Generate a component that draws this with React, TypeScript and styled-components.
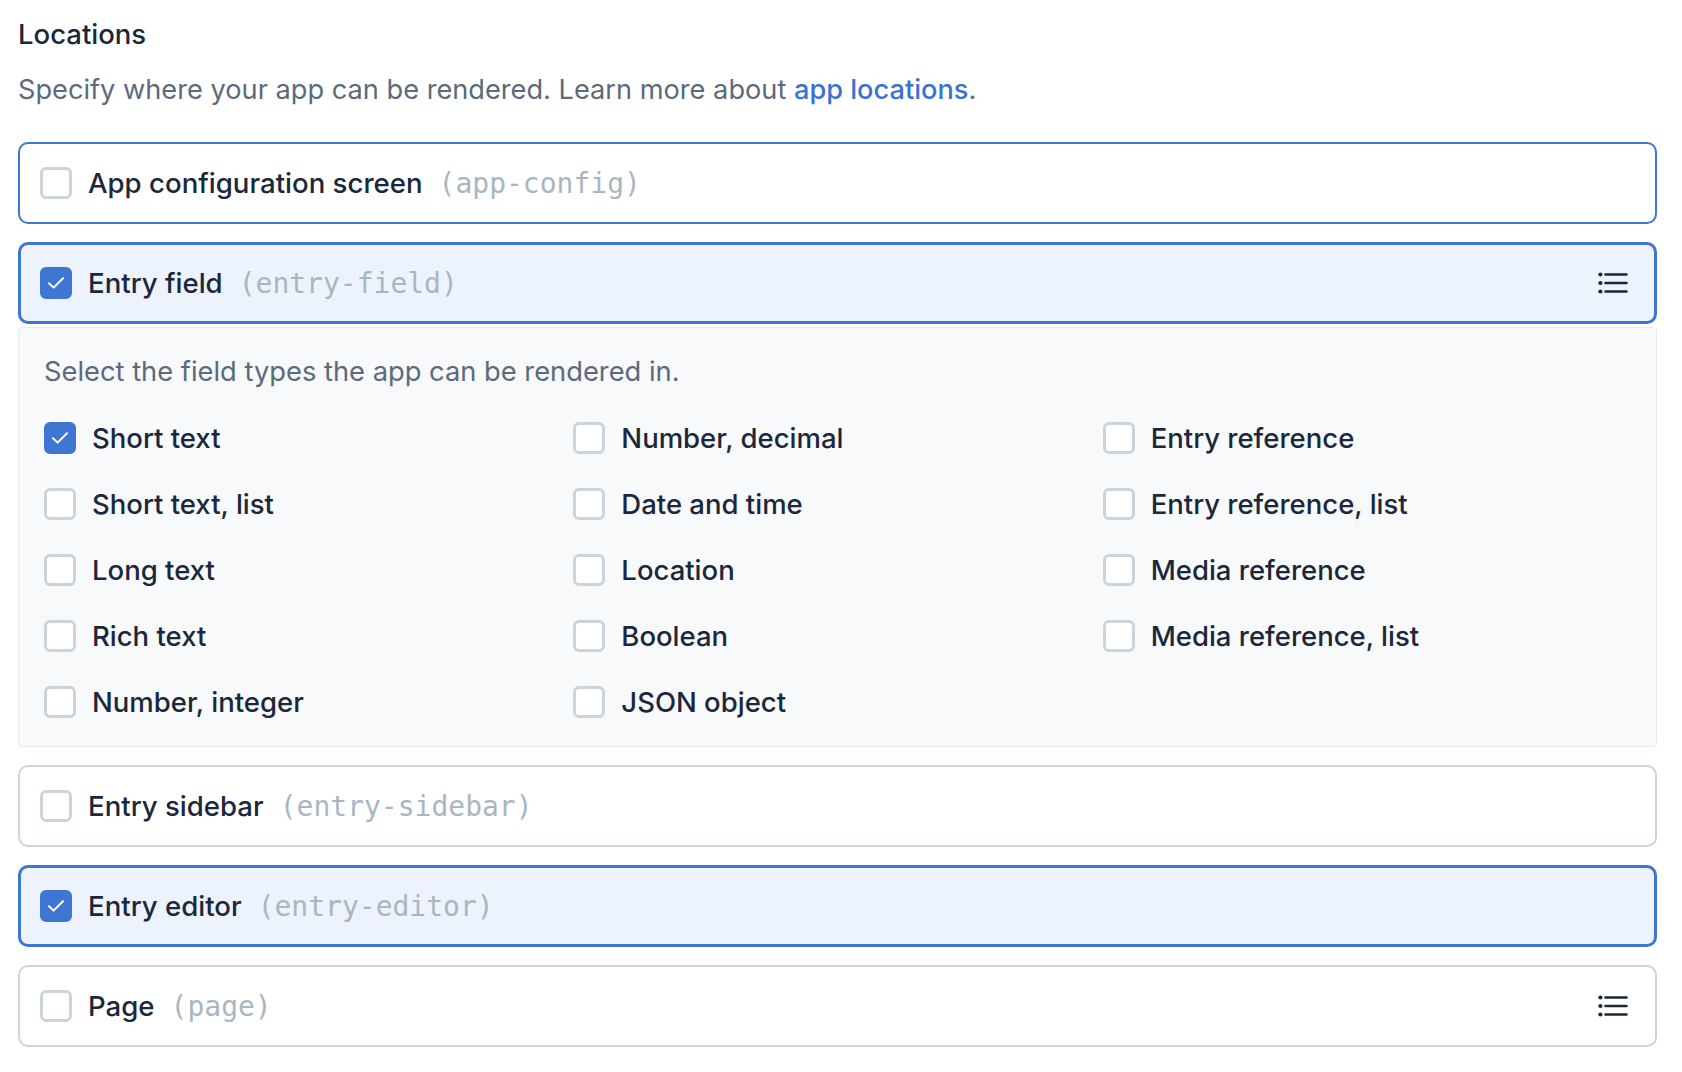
import React from 'react';
import styled, { createGlobalStyle, css } from 'styled-components';

const GlobalStyle = createGlobalStyle`
  * { box-sizing: border-box; }
  body {
    margin: 0;
    background: #ffffff;
    font-family: Inter, "Noto Sans", sans-serif;
    color: #1b273a;
  }
`;

type Location = {
  name: string;
  id: string;
  checked: boolean;
  focused?: boolean;
  listIcon?: boolean;
};

const locations: Location[] = [
  { name: 'App configuration screen', id: 'app-config', checked: false, focused: true },
  { name: 'Entry field', id: 'entry-field', checked: true, listIcon: true },
  { name: 'Entry sidebar', id: 'entry-sidebar', checked: false },
  { name: 'Entry editor', id: 'entry-editor', checked: true },
  { name: 'Page', id: 'page', checked: false, listIcon: true },
];

// row by row, three columns
const fieldTypes: { label: string; checked: boolean }[] = [
  { label: 'Short text', checked: true },
  { label: 'Number, decimal', checked: false },
  { label: 'Entry reference', checked: false },
  { label: 'Short text, list', checked: false },
  { label: 'Date and time', checked: false },
  { label: 'Entry reference, list', checked: false },
  { label: 'Long text', checked: false },
  { label: 'Location', checked: false },
  { label: 'Media reference', checked: false },
  { label: 'Rich text', checked: false },
  { label: 'Boolean', checked: false },
  { label: 'Media reference, list', checked: false },
  { label: 'Number, integer', checked: false },
  { label: 'JSON object', checked: false },
];

const Checkbox = ({ checked }: { checked: boolean }) => (
  <Box $checked={checked}>
    {checked && (
      <svg width="18" height="14" viewBox="0 0 18 14" fill="none">
        <path d="M2 7.2 L6.6 11.6 L16 2.2" stroke="#ffffff" strokeWidth="2" strokeLinecap="round" strokeLinejoin="round" />
      </svg>
    )}
  </Box>
);

const ListIcon = () => (
  <IconWrap>
    <svg width="30" height="22" viewBox="0 0 30 22" fill="none">
      <circle cx="2.4" cy="2.5" r="2.1" fill="#1b273a" />
      <circle cx="2.4" cy="11" r="2.1" fill="#1b273a" />
      <circle cx="2.4" cy="19.5" r="2.1" fill="#1b273a" />
      <path d="M7.5 2.5 H28.5 M7.5 11 H28.5 M7.5 19.5 H28.5" stroke="#1b273a" strokeWidth="2.6" strokeLinecap="round" />
    </svg>
  </IconWrap>
);

const LocationCard = ({ loc }: { loc: Location }) => (
  <Card $checked={loc.checked} $focused={!!loc.focused}>
    <Checkbox checked={loc.checked} />
    <CardLabel>{loc.name}</CardLabel>
    <Code>({loc.id})</Code>
    {loc.listIcon && <ListIcon />}
  </Card>
);

export default function App() {
  return (
    <Page>
      <GlobalStyle />
      <Heading>Locations</Heading>
      <Description>
        Specify where your app can be rendered. Learn more about <Link href="#">app locations</Link>.
      </Description>
      <List>
        {locations.map((loc) =>
          loc.id === 'entry-field' ? (
            <Group key={loc.id}>
              <LocationCard loc={loc} />
              <Panel>
                <Hint>Select the field types the app can be rendered in.</Hint>
                <FieldGrid>
                  {fieldTypes.map((f) => (
                    <FieldItem key={f.label}>
                      <Checkbox checked={f.checked} />
                      <FieldLabel>{f.label}</FieldLabel>
                    </FieldItem>
                  ))}
                </FieldGrid>
              </Panel>
            </Group>
          ) : (
            <LocationCard key={loc.id} loc={loc} />
          ),
        )}
      </List>
    </Page>
  );
}

const blue = '#3f76d1';

const Page = styled.div`
  padding: 16px 25px 24px 18px;
`;

const Heading = styled.h2`
  margin: 0;
  font-size: 27.5px;
  line-height: 36px;
  font-weight: 500;
  color: #1b273a;
`;

const Description = styled.p`
  margin: 18px 0 0;
  font-size: 27.2px;
  line-height: 40px;
  color: #5b6a7c;
`;

const Link = styled.a`
  color: #3a72d2;
  font-weight: 500;
  text-decoration: none;
`;

const List = styled.div`
  margin-top: 32px;
  display: flex;
  flex-direction: column;
  gap: 18px;
`;

const Group = styled.div`
  display: flex;
  flex-direction: column;
  gap: 3px;
`;

const Card = styled.div<{ $checked: boolean; $focused: boolean }>`
  height: 82px;
  display: flex;
  align-items: center;
  border-radius: 10px;
  border: 2px solid #cdd5db;
  background: #ffffff;
  padding: 0 27px 0 20px;
  ${({ $focused }) =>
    $focused &&
    css`
      border-color: ${blue};
    `}
  ${({ $checked }) =>
    $checked &&
    css`
      border: 3px solid ${blue};
      background: #edf3fc;
      padding: 0 26px 0 19px;
    `}
`;

const Box = styled.span<{ $checked: boolean }>`
  flex: none;
  width: 32px;
  height: 32px;
  border-radius: 6px;
  display: inline-flex;
  align-items: center;
  justify-content: center;
  border: 3px solid #cad4da;
  background: #ffffff;
  ${({ $checked }) =>
    $checked &&
    css`
      border-color: ${blue};
      background: ${blue};
    `}
`;

const CardLabel = styled.span`
  margin-left: 16px;
  font-size: 27.6px;
  font-weight: 500;
  color: #1b273a;
`;

const Code = styled.code`
  margin-left: 16px;
  font-family: "DejaVu Sans Mono", "Liberation Mono", monospace;
  font-size: 28px;
  color: #aab6bf;
`;

const IconWrap = styled.span`
  margin-left: auto;
  display: inline-flex;
`;

const Panel = styled.div`
  height: 420px;
  border: 1px solid #e6ebee;
  border-radius: 4px;
  background: #f7f9fa;
  padding: 26px 24px 0 25px;
`;

const Hint = styled.p`
  margin: 0;
  font-size: 27.3px;
  line-height: 36px;
  color: #5b6a7c;
`;

const FieldGrid = styled.div`
  margin-top: 32px;
  display: grid;
  grid-template-columns: repeat(3, 1fr);
  row-gap: 34px;
`;

const FieldItem = styled.label`
  display: flex;
  align-items: center;
  height: 32px;
`;

const FieldLabel = styled.span`
  margin-left: 16px;
  font-size: 27.5px;
  font-weight: 500;
  color: #1b273a;
`;
